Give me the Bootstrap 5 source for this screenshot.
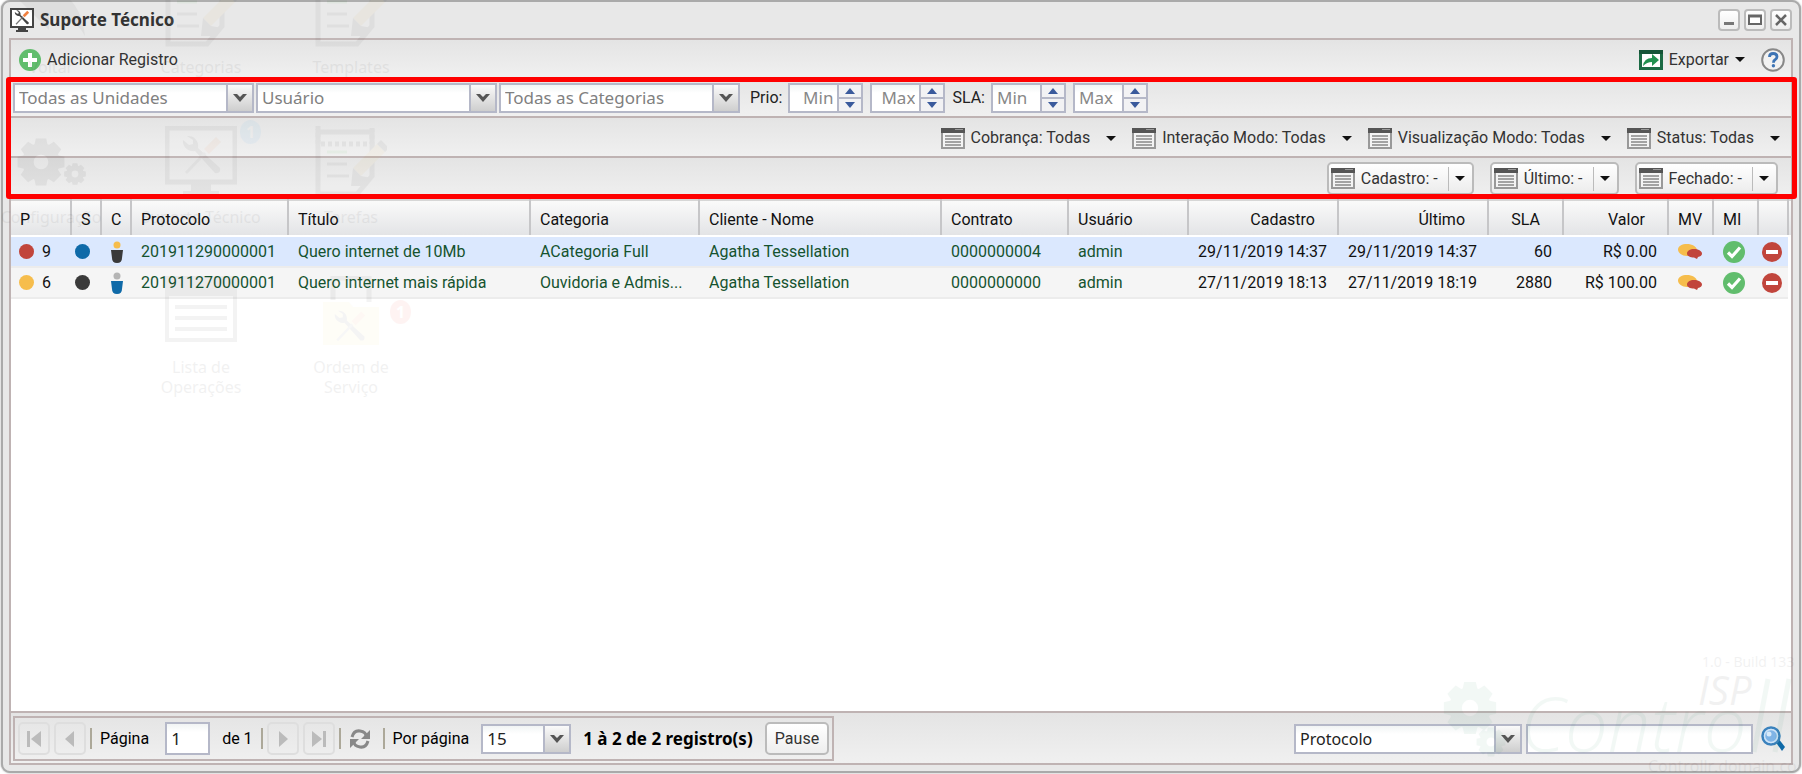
<!DOCTYPE html>
<html lang="pt-BR">
<head>
<meta charset="utf-8">
<meta name="viewport" content="width=device-width, initial-scale=1">
<title>Suporte Técnico</title>
<link href="https://cdn.jsdelivr.net/npm/bootstrap@5.3.0/dist/css/bootstrap.min.css" rel="stylesheet">
<style>
  :root { --line: #bfb3b3; --field: #b5b8c8; --green: #15532f; }
  body { font-family: Roboto, "Liberation Sans", sans-serif; font-size: 16px; line-height: 20px; color: #111; background: #fff; }
  .app-window { border: 2px solid #aaa; border-radius: 9px; background: #e8e8e8; margin: 0 1px 1px; padding: 0 6px 6px; box-shadow: 0 0 2px #999; }
  .title-bar { height: 36px; padding: 0 1px; }
  .title-text { font: 700 17px/20px "Noto Sans", sans-serif; color: #333; margin-left: 6px; }
  .tool { width: 22px; height: 22px; border: 2px solid #bbb; border-radius: 4px; background: linear-gradient(#fff, #eee); padding: 0; display: flex; align-items: center; justify-content: center; }
  .panel { border: 2px solid var(--line); background: #fff; }
  .bar { background: linear-gradient(#e4e4e4, #f0f0f0); color: #333; }
  .bar-main { height: 37px; padding: 2px 6px 0 8px; }
  .bar-a { height: 41px; border-bottom: 2px solid var(--line); padding: 2px 2px 0; color: #222; gap: 2px; }
  .bar-b { height: 40px; border-bottom: 2px solid var(--line); padding: 2px 11px 0 0; gap: 16px; }
  .bar-c { height: 41px; padding: 0 13px 0 0; gap: 16px; }
  .marked { position: relative; }
  .marked::after { content: ""; position: absolute; inset: 0 -6px 0 -5px; border: 5px solid #f00; border-radius: 3px; pointer-events: none; z-index: 2; }
  .plain { border: 0; background: none; padding: 0; color: #333; display: flex; align-items: center; gap: 6px; white-space: nowrap; }
  .caret { width: 0; height: 0; border: 5px solid transparent; border-top-color: #111; border-bottom: 0; }
  .plain.wide .caret { margin-left: 10px; }
  .split { height: 33px; border: 2px solid #bbb; border-radius: 5px; background: linear-gradient(#fff, #ececec); display: flex; align-items: center; padding: 0 2px; gap: 10px; }
  .split .drop { border: 0; border-left: 1px solid #bbb; background: none; height: 24px; width: 22px; padding: 0 0 0 6px; }
  .field { height: 30px; border: 2px solid var(--field); border-radius: 0; background: linear-gradient(#f1f4f4, #fff 8px); font: 17px/24px "Noto Sans", sans-serif; color: #222; padding: 0 4px; }
  .soft { color: #808080; }
  .combo { appearance: none; padding-right: 28px; background:
      url("data:image/svg+xml,%3Csvg xmlns='http://www.w3.org/2000/svg' width='14' height='8'%3E%3Cpath d='M0 0h4l3 3 3-3h4L7 8z' fill='%23555'/%3E%3C/svg%3E") no-repeat right 5px center,
      linear-gradient(90deg, #b5b8c8 2px, transparent 2px) no-repeat right / 26px 100%,
      linear-gradient(#fafafa, #cecece) no-repeat right / 26px 100%,
      linear-gradient(#f1f4f4, #fff 8px); }
  .combo.filter { width: 241px; }
  .combo.pages { width: 90px; }
  .combo.by { width: 228px; font-size: 16px; }
  .page-no { width: 45px; height: 33px; }
  .query { width: 227px; }
  .spin { width: 75px; display: flex; margin-right: 5px; }
  .spin input { width: 51px; }
  .spin input::placeholder { color: #888; }
  .arrows { width: 26px; margin-left: -2px; display: flex; flex-direction: column; }
  .arrows button { height: 16px; border: 2px solid var(--field); background: #f2f2f4; padding: 0; display: flex; align-items: center; justify-content: center; }
  .arrows button + button { margin-top: -2px; }
  .records { table-layout: fixed; width: 100%; border-top: 2px solid #1c7c1c; margin: 0; }
  .records th { height: 36px; font-weight: 400; border-right: 2px solid #c6c6c8; border-top: 2px solid #d6d6d6; border-bottom: 2px solid #fff; background: linear-gradient(#fafafa, #e3e4e6); padding: 3px 0 0 9px; }
  .records th.num { text-align: right; padding-right: 22px; }
  .records td { height: 31px; padding: 0 0 0 10px; border-bottom: 2px solid #ececec; background: #f5f5f5; white-space: nowrap; overflow: hidden; text-overflow: ellipsis; }
  .records td:first-child { padding-left: 8px; }
  .records td.num { text-align: right; padding: 0 11px 0 0; }
  .records .picked td { background: #dbe8fe; }
  .records td.gap-end, .records th.gap-end { padding: 0; border-right: 0; }
  .records td.gap-end { background: #fff !important; border-color: #fff; }
  .records a { color: var(--green); text-decoration: none; }
  .records svg { display: block; }
  .dot { width: 15px; height: 15px; border-radius: 50%; display: inline-block; flex: none; }
  .dot.red { background: #c1453c; }
  .dot.amber { background: #f6bd4c; }
  .dot.blue { background: #0f6aa8; }
  .dot.black { background: #3a3a3a; }
  .foot { height: 52px; border-top: 2px solid var(--line); padding: 1px 6px 0 2px; }
  .pager { border: 2px solid var(--line); height: 45px; padding: 0 3px; width: 821px; }
  .nav-btn { width: 32px; height: 33px; border: 2px solid #dedede; border-radius: 5px; background: none; padding: 0; display: flex; align-items: center; justify-content: center; }
  .rule { width: 2px; height: 21px; background: #aca899; flex: none; }
  .pause { border: 2px solid #bbb; border-radius: 5px; height: 33px; width: 64px; background: linear-gradient(#fff, #eee); color: #333; padding: 0; }
  .total { font: 700 17px/20px "Noto Sans", sans-serif; }
  /* Desktop that shows faintly through the window */
  .desk { position: absolute; inset: 0; overflow: hidden; pointer-events: none; opacity: .05; z-index: 1; color: #000; font-family: "Noto Sans", sans-serif; }
  .shortcuts { position: absolute; left: -24px; top: -24px; display: grid; grid-template-columns: repeat(3, 150px); grid-auto-rows: 150px; text-align: center; }
  .shortcuts svg { display: block; margin: 0 auto 9px; }
  .shortcuts .one { position: relative; }
  .shortcuts .mid { grid-column: 2; }
  .bubble { position: absolute; left: 114px; top: -6px; width: 21px; height: 24px; border-radius: 50%; color: #fff; font-weight: 700; line-height: 24px; }
  .bubble.info { background: #28a0f0; }
  .bubble.alert-red { background: #f03020; top: 24px; }
  .brand { position: absolute; right: 0; bottom: 0; width: 370px; height: 130px; }
</style>
</head>
<body>
<svg class="d-none">
  <symbol id="list" viewBox="0 0 24 21"><path d="M0 0h24v21H0z" fill="#999"/><path d="M0 0h24v5H0z" fill="#555"/><path d="M14 1.500h8" stroke="#999"/><path d="M2 5h20v14H2z" fill="#f4f4f4"/><path d="M4 8h16M4 11h16M4 14h16M4 17h16" stroke="#888" stroke-width="1.500"/></symbol>
  <symbol id="cog" viewBox="-30 -30 60 60"><circle r="15" fill="none" stroke="currentColor" stroke-width="13"/><g fill="currentColor"><path id="teeth" d="M-6-27H6L8-18H-8zM-6 27H6L8 18H-8zM-27-6V6L-18 8V-8zM27-6V6L18 8V-8z"/><use href="#teeth" transform="rotate(45)"/></g></symbol>
  <symbol id="tools" viewBox="0 0 40 40"><path d="M5 1a10 10 0 0 1 11 12l22 20q1 6-5 5L13 16A10 10 0 0 1 1 5l6 5 4-1 0-4z" fill="#444"/><path d="M4 38l19-20" stroke="#777" stroke-width="3"/><path d="M22 14L34 2l5 5-12 12z" fill="#f08040"/></symbol>
  <symbol id="screen" viewBox="0 0 72 72"><path d="M2 2h68v54H2z" fill="#fff" stroke="#333" stroke-width="5"/><path d="M26 57h20v8h8v5H18v-5h8z" fill="#333"/><use href="#tools" x="15" y="9" width="44" height="40"/></symbol>
  <symbol id="note" viewBox="0 0 72 72"><path d="M3 6h54v44L42 68H3z" fill="#fff" stroke="#333" stroke-width="5"/><path d="M3 0v18h54V0" fill="none" stroke="#333" stroke-width="5" stroke-dasharray="4 3"/><path d="M12 26h20" stroke="#4b4" stroke-width="3"/><path d="M12 38h20M12 50h22" stroke="#444" stroke-width="3"/><path d="M38 42L62 18l8 8-24 24z" fill="#f2c14c"/><path d="M38 42l-2 18h16l5-8-11-2zM62 18l4-4 8 8-4 4z" fill="#333"/></symbol>
  <symbol id="bubbles" viewBox="0 0 24 16"><path d="M9 0c5 0 10 2.500 10 6.500S14 12 9 12C4 12 0 9 0 5.500S4 0 9 0z" fill="#f6bd4c"/><path d="M16 5c4 0 8 2 8 4.500 0 2-1.500 3-4 3.500l-1 2-3-1.500c-4 0-7-1.500-7-4S12 5 16 5z" fill="#c1453c"/></symbol>
  <symbol id="ok" viewBox="0 0 22 22"><circle cx="11" cy="11" r="11" fill="#61bd6d"/><path d="M5 11.500l4 4 8-9" fill="none" stroke="#fff" stroke-width="3.200"/></symbol>
  <symbol id="minus" viewBox="0 0 20 20"><circle cx="10" cy="10" r="10" fill="#c1453c"/><path d="M4 8h12v4H4z" fill="#fff"/></symbol>
</svg>

<div class="min-vh-100 d-flex flex-column position-relative">
  <main class="app-window flex-grow-1 d-flex flex-column">
    <header class="title-bar d-flex align-items-center">
      <svg width="24" height="24" viewBox="0 0 24 24"><path d="M1 1h22v18H1z" fill="#fff" stroke="#444" stroke-width="2"/><path d="M8 20h8v2h2v2H6v-2h2z" fill="#444"/><use href="#tools" x="4" y="2" width="16" height="15"/></svg>
      <h1 class="title-text mb-0 flex-grow-1">Suporte Técnico</h1>
      <div class="d-flex gap-1">
        <button class="tool" aria-label="Minimizar"><svg width="14" height="14"><path d="M2 9h10v3H2z" fill="#777"/></svg></button>
        <button class="tool" aria-label="Maximizar"><svg width="16" height="14"><path d="M2 3h12v8H2z" fill="#fff" stroke="#666" stroke-width="2"/><path d="M1 3h14" stroke="#666" stroke-width="3"/></svg></button>
        <button class="tool" aria-label="Fechar"><svg width="14" height="14"><path d="M2 2l10 10M12 2L2 12" stroke="#666" stroke-width="2.500"/></svg></button>
      </div>
    </header>

    <div class="panel flex-grow-1 d-flex flex-column">
      <div class="bar bar-main d-flex align-items-center justify-content-between">
        <button class="plain"><svg width="22" height="22" viewBox="0 0 22 22"><circle cx="11" cy="11" r="11" fill="#61bd6d"/><path d="M11 4v14M4 11h14" stroke="#fff" stroke-width="4"/></svg>Adicionar Registro</button>
        <div class="d-flex align-items-center gap-3">
          <button class="plain"><svg width="24" height="20" viewBox="0 0 24 20"><path d="M1.500 1.500h21v17h-21z" fill="#fff" stroke="#1c6b45" stroke-width="3"/><path d="M0 0h24v4H0z" fill="#155438"/><path d="M4 16q1-8 9-8V4l7 6-7 6v-4q-5 0-9 4z" fill="#219150"/></svg>Exportar<span class="caret"></span></button>
          <a href="#ajuda" aria-label="Ajuda"><svg class="d-block" width="24" height="24" viewBox="0 0 24 24"><circle cx="12" cy="12" r="10.800" fill="#f2f2f2" stroke="#888" stroke-width="2"/><path d="M8.500 9q0-3.500 3.700-3.500T16 8.800q0 2-2.200 3.200-1.300.8-1.300 2.700" fill="none" stroke="#3d74b5" stroke-width="2.800"/><circle cx="12.400" cy="17.800" r="1.700" fill="#3d74b5"/></svg></a>
        </div>
      </div>

      <section class="marked" aria-label="Filtros">
        <div class="bar bar-a d-flex align-items-center">
          <select class="field combo filter soft" aria-label="Unidade"><option>Todas as Unidades</option></select>
          <select class="field combo filter soft" aria-label="Usuário"><option>Usuário</option></select>
          <select class="field combo filter soft" aria-label="Categoria"><option>Todas as Categorias</option></select>
          <label for="prioMin" class="ms-2 me-1">Prio:</label>
          <div class="spin"><input id="prioMin" class="field text-end" placeholder="Min"><span class="arrows"><button aria-label="Mais"><svg width="10" height="6"><path d="M0 6l5-6 5 6z" fill="#3a5a9c"/></svg></button><button aria-label="Menos"><svg width="10" height="6"><path d="M0 0h10L5 6z" fill="#3a5a9c"/></svg></button></span></div>
          <div class="spin"><input class="field text-end" placeholder="Max" aria-label="Prio máxima"><span class="arrows"><button aria-label="Mais"><svg width="10" height="6"><path d="M0 6l5-6 5 6z" fill="#3a5a9c"/></svg></button><button aria-label="Menos"><svg width="10" height="6"><path d="M0 0h10L5 6z" fill="#3a5a9c"/></svg></button></span></div>
          <label for="slaMin" class="me-1">SLA:</label>
          <div class="spin"><input id="slaMin" class="field" placeholder="Min"><span class="arrows"><button aria-label="Mais"><svg width="10" height="6"><path d="M0 6l5-6 5 6z" fill="#3a5a9c"/></svg></button><button aria-label="Menos"><svg width="10" height="6"><path d="M0 0h10L5 6z" fill="#3a5a9c"/></svg></button></span></div>
          <div class="spin"><input class="field" placeholder="Max" aria-label="SLA máximo"><span class="arrows"><button aria-label="Mais"><svg width="10" height="6"><path d="M0 6l5-6 5 6z" fill="#3a5a9c"/></svg></button><button aria-label="Menos"><svg width="10" height="6"><path d="M0 0h10L5 6z" fill="#3a5a9c"/></svg></button></span></div>
        </div>
        <div class="bar bar-b d-flex align-items-center justify-content-end">
          <button class="plain wide"><svg width="24" height="21"><use href="#list"/></svg>Cobrança: Todas<span class="caret"></span></button>
          <button class="plain wide"><svg width="24" height="21"><use href="#list"/></svg>Interação Modo: Todas<span class="caret"></span></button>
          <button class="plain wide"><svg width="24" height="21"><use href="#list"/></svg>Visualização Modo: Todas<span class="caret"></span></button>
          <button class="plain wide"><svg width="24" height="21"><use href="#list"/></svg>Status: Todas<span class="caret"></span></button>
        </div>
        <div class="bar bar-c d-flex align-items-center justify-content-end">
          <div class="split"><button class="plain"><svg width="24" height="21"><use href="#list"/></svg>Cadastro: -</button><button class="drop" aria-label="Opções de cadastro"><span class="caret d-block"></span></button></div>
          <div class="split"><button class="plain"><svg width="24" height="21"><use href="#list"/></svg>Último: -</button><button class="drop" aria-label="Opções de último"><span class="caret d-block"></span></button></div>
          <div class="split"><button class="plain"><svg width="24" height="21"><use href="#list"/></svg>Fechado: -</button><button class="drop" aria-label="Opções de fechado"><span class="caret d-block"></span></button></div>
        </div>
      </section>

      <div class="flex-grow-1">
        <table class="records">
          <colgroup><col width="60"><col width="30"><col width="30"><col width="157"><col><col width="169"><col><col width="127"><col width="120"><col width="150"><col width="150"><col width="75"><col width="105"><col width="45"><col width="45"><col width="30"><col width="3"></colgroup>
          <thead><tr><th>P</th><th>S</th><th>C</th><th>Protocolo</th><th>Título</th><th>Categoria</th><th>Cliente - Nome</th><th>Contrato</th><th>Usuário</th><th class="num">Cadastro</th><th class="num">Último</th><th class="num">SLA</th><th class="num">Valor</th><th>MV</th><th>MI</th><th></th><th class="gap-end"></th></tr></thead>
          <tbody>
            <tr class="picked">
              <td><span class="d-flex align-items-center gap-2"><span class="dot red"></span>9</span></td>
              <td class="ps-1"><span class="dot d-block blue"></span></td>
              <td><svg width="12" height="22"><circle cx="6" cy="4" r="3.500" fill="#f6bd4c"/><path d="M0 9h12l-1 8q0 5-5 5t-5-5z" fill="#3a3a3a"/></svg></td>
              <td><a href="#p1">201911290000001</a></td><td><a href="#p1">Quero internet de 10Mb</a></td><td><a href="#p1">ACategoria Full</a></td><td><a href="#p1">Agatha Tessellation</a></td><td><a href="#p1">0000000004</a></td><td><a href="#p1">admin</a></td>
              <td class="num">29/11/2019 14:37</td><td class="num">29/11/2019 14:37</td><td class="num">60</td><td class="num">R$ 0.00</td>
              <td><svg width="24" height="16"><use href="#bubbles"/></svg></td><td><svg width="22" height="22"><use href="#ok"/></svg></td><td class="ps-1"><svg width="20" height="20"><use href="#minus"/></svg></td><td class="gap-end"></td>
            </tr>
            <tr>
              <td><span class="d-flex align-items-center gap-2"><span class="dot amber"></span>6</span></td>
              <td class="ps-1"><span class="dot d-block black"></span></td>
              <td><svg width="12" height="22"><circle cx="6" cy="4" r="3.500" fill="#b5b5b5"/><path d="M0 9h12l-1 8q0 5-5 5t-5-5z" fill="#0f6aa8"/></svg></td>
              <td><a href="#p2">201911270000001</a></td><td><a href="#p2">Quero internet mais rápida</a></td><td><a href="#p2">Ouvidoria e Admis...</a></td><td><a href="#p2">Agatha Tessellation</a></td><td><a href="#p2">0000000000</a></td><td><a href="#p2">admin</a></td>
              <td class="num">27/11/2019 18:13</td><td class="num">27/11/2019 18:19</td><td class="num">2880</td><td class="num">R$ 100.00</td>
              <td><svg width="24" height="16"><use href="#bubbles"/></svg></td><td><svg width="22" height="22"><use href="#ok"/></svg></td><td class="ps-1"><svg width="20" height="20"><use href="#minus"/></svg></td><td class="gap-end"></td>
            </tr>
          </tbody>
        </table>
      </div>

      <footer class="bar foot d-flex align-items-center justify-content-between">
        <div class="pager d-flex align-items-center text-black">
          <button class="nav-btn me-1" aria-label="Primeira"><svg width="16" height="18"><path d="M1 1h3v16H1zM15 1v16L5 9z" fill="#bbb"/></svg></button>
          <button class="nav-btn" aria-label="Anterior"><svg width="16" height="18"><path d="M12 1v16L3 9z" fill="#bbb"/></svg></button>
          <span class="rule mx-1"></span>
          <label for="page" class="mx-1 pe-1">Página</label>
          <input id="page" class="field page-no ms-2" value="1">
          <span class="ms-2 me-2 ps-1">de 1</span>
          <span class="rule me-1"></span>
          <button class="nav-btn me-1" aria-label="Próxima"><svg width="16" height="18"><path d="M4 1v16l9-8z" fill="#bbb"/></svg></button>
          <button class="nav-btn" aria-label="Última"><svg width="16" height="18"><path d="M12 1h3v16h-3zM1 1v16l10-8z" fill="#bbb"/></svg></button>
          <span class="rule mx-1"></span>
          <button class="plain mx-1" aria-label="Atualizar"><svg width="22" height="22" viewBox="0 0 22 22"><path d="M3 9q2-7 8-6t6 5M19 13q-2 7-8 6t-6-5" fill="none" stroke="#888" stroke-width="3"/><path d="M21 2v9h-9zM1 20v-9h9z" fill="#888"/></svg></button>
          <span class="rule ms-2 me-2"></span>
          <label for="per" class="me-1">Por página</label>
          <select id="per" class="field combo pages ms-2 me-2"><option>15</option></select>
          <span class="total mx-1 flex-grow-1">1 à 2 de 2 registro(s)</span>
          <button class="pause">Pause</button>
        </div>
        <div class="d-flex align-items-center">
          <select class="field combo by me-1" aria-label="Campo"><option>Protocolo</option></select>
          <input class="field query me-2" aria-label="Pesquisar">
          <button class="plain" aria-label="Buscar"><svg width="24" height="25" viewBox="0 0 24 25"><path d="M14 15l3-3 7 9-3 4z" fill="#0f6aa8"/><circle cx="10" cy="10" r="8.500" fill="#7fb4e6" stroke="#3b82bd" stroke-width="2.500"/><circle cx="10" cy="10" r="6.500" fill="none" stroke="#cfe4f7" stroke-width="1.500"/><circle cx="8" cy="8" r="2.500" fill="#d8eafa"/></svg></button>
        </div>
      </footer>
    </div>
  </main>

  <div class="desk" aria-hidden="true">
    <div class="shortcuts">
      <div><svg width="72" height="72"><path d="M4 24L34 2v14q30 0 36 44-10-20-36-20v14z" fill="#333"/></svg>Voltar</div>
      <div><svg width="72" height="72"><use href="#note"/></svg>Categorias</div>
      <div><svg width="72" height="72"><use href="#note"/></svg>Templates</div>
      <div><svg width="72" height="72"><use href="#cog" width="52" height="52" y="10"/><use href="#cog" x="48" y="36" width="24" height="24"/></svg>Configuração</div>
      <div class="one"><svg width="72" height="72"><use href="#screen"/></svg>Suporte Técnico<span class="bubble info">1</span></div>
      <div><svg width="72" height="72"><use href="#note"/></svg>Tarefas</div>
      <div class="mid"><svg width="72" height="72"><path d="M2 6h68v58H2z" fill="#fff" stroke="#333" stroke-width="4"/><path d="M0 0h72v20H0zM10 29h52v4H10zM10 40h52v4H10zM10 51h52v4H10z" fill="#333"/></svg>Lista de<br>Operações</div>
      <div class="one"><svg width="72" height="72"><path d="M18 24V2h36v24" fill="#fff" stroke="#333" stroke-width="5"/><path d="M8 26h26l4 5h26v38H8z" fill="#fbe07a"/><use href="#tools" x="18" y="34" width="34" height="32"/></svg>Ordem de<br>Serviço<span class="bubble alert-red">1</span></div>
    </div>
    <svg class="brand" viewBox="0 0 370 130">
      <g color="#188058"><use href="#cog" x="9" y="35" width="58" height="58"/><use href="#cog" x="43" y="82" width="32" height="32"/></g>
      <g font-family="Open Sans, sans-serif"><text x="270" y="23" font-size="14">1.0 - Build 133</text><g font-style="italic" fill="#188058"><text x="88" y="108" font-size="76" font-weight="300">Contro</text><path d="M322 108l14-73M343 108l14-73" stroke="#188058" stroke-width="5"/></g><text x="266" y="61" font-size="40" font-style="italic">ISP</text><text x="216" y="128" font-size="16" fill="#000">Controllr.domain.co</text></g>
    </svg>
  </div>
</div>
<script src="https://cdn.jsdelivr.net/npm/bootstrap@5.3.0/dist/js/bootstrap.bundle.min.js"></script>
</body>
</html>
